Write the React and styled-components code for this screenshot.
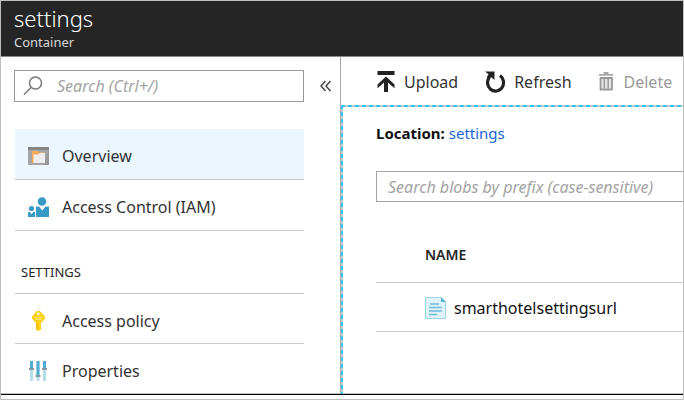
import React from "react";
import styled, { createGlobalStyle } from "styled-components";

const GlobalStyle = createGlobalStyle`
  * { box-sizing: border-box; }
  body {
    margin: 0;
    background: #fff;
    color: #252525;
    font: 16px/24px "Noto Sans", "Open Sans", sans-serif;
  }
  button, input { font: inherit; color: inherit; }
`;

const Frame = styled.div`
  display: flex;
  flex-direction: column;
  min-height: 100vh;
  padding-bottom: 4px;
  border: 1px solid #bebebe;
  overflow: hidden;
`;

const Header = styled.header`
  padding: 2px 13px 5px;
  background: #252525;
  border-bottom: 1px solid #8a8a8a;
`;

const Title = styled.h1`
  margin: 0;
  color: #fff;
  font-size: 22px;
  font-weight: 300;
  line-height: 30px;
`;

const Subtitle = styled.p`
  margin: 0;
  color: #d6d6d6;
  font-size: 13px;
  line-height: 18px;
`;

const Body = styled.div`
  display: flex;
  flex: 1;
  border-bottom: 1px solid #000;
  box-shadow: inset 0 -1px #bebebe;
`;

const Sidebar = styled.aside`
  flex: 0 0 340px;
  padding: 13px 0 0 13px;
  border-right: 1px solid #aaa;
`;

const SearchRow = styled.div`
  display: flex;
  align-items: center;
  gap: 11px;
`;

const SearchBox = styled.label`
  display: flex;
  align-items: center;
  gap: 14px;
  width: 290px;
  height: 32px;
  padding: 0 8px;
  border: 1px solid #999;
`;

const TextInput = styled.input`
  flex: 1;
  min-width: 0;
  padding: 0;
  border: 0;
  outline: 0;
  background: transparent;
  &::placeholder { color: #a3a3a3; font-style: italic; opacity: 1; }
`;

const CollapseButton = styled.button`
  display: flex;
  padding: 4px;
  border: 0;
  background: none;
`;

const Nav = styled.nav`
  width: 290px;
  margin-top: 27px;
  padding-left: 1px;
`;

const NavList = styled.ul`
  margin: 0;
  padding: 0;
  list-style: none;
`;

const NavItem = styled.li`
  border-bottom: ${(p) => (p.$last ? "0" : "1px solid #c8c8c8")};
`;

const NavLink = styled.a`
  display: flex;
  align-items: center;
  gap: 13px;
  height: ${(p) => (p.$compact ? 49 : 50)}px;
  padding: 4px 13px 0;
  background: ${(p) => (p.$active ? "#ebf6ff" : "transparent")};
  color: #333;
  text-decoration: none;
`;

const NavHeading = styled.h2`
  margin: 0;
  padding: 29px 6px 8px;
  border-bottom: 1px solid #c8c8c8;
  font-size: 13px;
  font-weight: 400;
  line-height: 25px;
`;

const Main = styled.main`
  display: flex;
  flex: 1;
  flex-direction: column;
  min-width: 0;
`;

const Toolbar = styled.div`
  display: flex;
  align-items: center;
  gap: 26px;
  height: 48px;
  padding: 2px 12px 0 35px;
`;

const Command = styled.button`
  display: flex;
  align-items: center;
  gap: 8px;
  padding: 0;
  border: 0;
  background: none;
  color: #333;
  white-space: nowrap;
  &:disabled { color: #999; }
`;

const Content = styled.section`
  flex: 1;
  padding: 16px 0 0 35px;
  background:
    repeating-linear-gradient(90deg, #32c5f4 0 4px, #c9c9c9 4px 7px) top / 100% 2px no-repeat,
    repeating-linear-gradient(#32c5f4 0 4px, #c9c9c9 4px 7px) left / 2px 100% no-repeat;
`;

const Location = styled.p`
  margin: 0 0 26px;
  color: #111;
  font-size: 15px;
`;

const Link = styled.a`
  color: #1766dc;
  text-decoration: none;
`;

const FilterBox = styled.label`
  display: flex;
  align-items: center;
  height: 31px;
  padding: 0 11px;
  border: 1px solid #a5a5a5;
  border-right: 0;
`;

const BlobTable = styled.table`
  width: 100%;
  margin-top: 27px;
  border-collapse: collapse;
  text-align: left;
`;

const HeadCell = styled.th`
  height: 53px;
  padding: 0 0 0 49px;
  border-bottom: 1px solid #ccc;
  font-size: 14px;
  font-weight: 600;
`;

const Cell = styled.td`
  height: 49px;
  padding: 3px 0 0 49px;
  border-bottom: 1px solid #ccc;
`;

const BlobName = styled.div`
  display: flex;
  align-items: center;
  gap: 8px;
  color: #111;
`;

const Icon = styled.svg`
  flex: none;
  display: block;
`;

const SearchIcon = () => (
  <Icon width="20" height="20" viewBox="0 0 20 20" fill="none" stroke="#777" strokeWidth="1.5" aria-hidden="true">
    <circle cx="12.5" cy="7" r="6" />
    <path d="M8.3 11.3 1 18.5" />
  </Icon>
);

const ChevronsIcon = () => (
  <Icon width="13" height="12" viewBox="0 0 13 12" fill="none" stroke="#444" strokeWidth="1.4" aria-hidden="true">
    <path d="M6.500 1 2 6l4.500 5M11.500 1 7 6l4.500 5" />
  </Icon>
);

const UploadIcon = () => (
  <Icon width="20" height="22" viewBox="0 0 20 22" aria-hidden="true">
    <path fill="#222" d="M1.500 0h17v4h-17zM10 5.500l8.500 8v3.800L12 11.500V21H8v-9.500l-6.500 5.800v-3.800z" />
  </Icon>
);

const RefreshIcon = () => (
  <Icon width="22" height="22" viewBox="0 0 22 22" aria-hidden="true">
    <path d="M5.500 6A8 8.500 0 1 0 16 4.500" fill="none" stroke="#222" strokeWidth="3.200" />
    <path d="M1 .5h9.500v8.500L7.300 6.200 4.500 8 2.800 6.200 4.500 3.200z" fill="#222" />
  </Icon>
);

const TrashIcon = () => (
  <Icon width="18" height="20" viewBox="0 0 18 20" aria-hidden="true">
    <path d="M5.500 0h5v2h4.500v1.800H1V2h4.500z" fill="#a8a8a8" />
    <path d="M2.500 6v11.500h11.500V6z" fill="#e6e6e6" stroke="#999" strokeWidth="1.800" strokeLinejoin="round" />
    <path d="M6.300 6v10.500M10.200 6v10.500" stroke="#999" strokeWidth="1.500" />
  </Icon>
);

const OverviewIcon = () => (
  <Icon width="21" height="20" viewBox="0 0 21 20" aria-hidden="true">
    <path d="M0 1h21v18H0z" fill="#a6a6a6" />
    <path d="M0 1h21v3H0z" fill="#858585" />
    <path d="M21 4v15h-5z" fill="#979797" />
    <path d="M4 5h6l1 1.500h6V17H4z" fill="#f5ad54" />
    <path d="M5.500 8.500h5l1-1.500H17V17H5.500z" fill="#eee" />
  </Icon>
);

const PeopleIcon = () => (
  <Icon width="21" height="20" viewBox="0 0 21 20" fill="#3999c6" aria-hidden="true">
    <circle cx="14" cy="4.500" r="4.300" />
    <path d="M8 9.500h3l3.200 4 3.300-4H21V20H8z" />
    <circle cx="3.500" cy="11.500" r="2.600" />
    <path d="M0 15h1.800l1.700 2.300L5.200 15H7v5H0z" />
  </Icon>
);

const KeyIcon = () => (
  <Icon width="21" height="20" viewBox="0 0 21 20" aria-hidden="true">
    <path d="M8.800 0h3L17 5.200v2.600L13 12v6.500L10.800 20 8 18.500V12L4 7.800V5.200z" fill="#fcd116" />
    <path d="M8 12h2v7.500L8 18.500z" fill="#ffb900" />
    <circle cx="10.300" cy="2.700" r="1.300" fill="#fff" />
    <path d="M6.500 6.500h8M7.500 8.500h6" stroke="#ffe67a" strokeWidth="1" />
  </Icon>
);

const SlidersIcon = () => (
  <Icon width="21" height="20" viewBox="0 0 21 20" aria-hidden="true">
    <path d="M2 0h3v20H2zM8.500 0h3v20h-3zM15 0h3v20h-3z" fill="#b5ddec" />
    <path d="M2 0h3v8H2zM8.500 0h3v14h-3zM15 0h3v8h-3z" fill="#50abd0" />
    <path d="M1 7h5v2H1zM7.500 14h5v2h-5zM14 7h5v2h-5z" fill="#85979f" />
  </Icon>
);

const FileIcon = () => (
  <Icon width="21" height="22" viewBox="0 0 21 22" aria-hidden="true">
    <path d="M.5.5H16L20.500 5v16.500H.5z" fill="#dff2f9" stroke="#9bd3e7" />
    <path d="M16 0v5h5z" fill="#59b4d9" />
    <path d="M5 7h9M4 10.500h13M4 14h13M4 17.500h8" stroke="#6fbcd9" strokeWidth="1.400" />
  </Icon>
);

const NavEntry = ({ icon, label, active, compact, last }) => (
  <NavItem $last={last}>
    <NavLink href="#" $active={active} $compact={compact} aria-current={active ? "page" : undefined}>
      {icon}
      {label}
    </NavLink>
  </NavItem>
);

export default function App() {
  return (
    <>
      <GlobalStyle />
      <Frame>
        <Header>
          <Title>settings</Title>
          <Subtitle>Container</Subtitle>
        </Header>
        <Body>
          <Sidebar>
            <SearchRow>
              <SearchBox>
                <SearchIcon />
                <TextInput type="text" placeholder="Search (Ctrl+/)" aria-label="Search" />
              </SearchBox>
              <CollapseButton type="button" aria-label="Collapse menu">
                <ChevronsIcon />
              </CollapseButton>
            </SearchRow>
            <Nav>
              <NavList>
                <NavEntry icon={<OverviewIcon />} label="Overview" active />
                <NavEntry icon={<PeopleIcon />} label="Access Control (IAM)" />
              </NavList>
              <NavHeading>SETTINGS</NavHeading>
              <NavList>
                <NavEntry icon={<KeyIcon />} label="Access policy" compact />
                <NavEntry icon={<SlidersIcon />} label="Properties" compact last />
              </NavList>
            </Nav>
          </Sidebar>
          <Main>
            <Toolbar>
              <Command type="button">
                <UploadIcon />
                Upload
              </Command>
              <Command type="button">
                <RefreshIcon />
                Refresh
              </Command>
              <Command type="button" disabled>
                <TrashIcon />
                Delete
              </Command>
            </Toolbar>
            <Content>
              <Location>
                <b>Location:</b> <Link href="#">settings</Link>
              </Location>
              <FilterBox>
                <TextInput
                  type="text"
                  placeholder="Search blobs by prefix (case-sensitive)"
                  aria-label="Search blobs by prefix"
                />
              </FilterBox>
              <BlobTable>
                <thead>
                  <tr>
                    <HeadCell scope="col">NAME</HeadCell>
                  </tr>
                </thead>
                <tbody>
                  <tr>
                    <Cell>
                      <BlobName>
                        <FileIcon />
                        smarthotelsettingsurl
                      </BlobName>
                    </Cell>
                  </tr>
                </tbody>
              </BlobTable>
            </Content>
          </Main>
        </Body>
      </Frame>
    </>
  );
}
